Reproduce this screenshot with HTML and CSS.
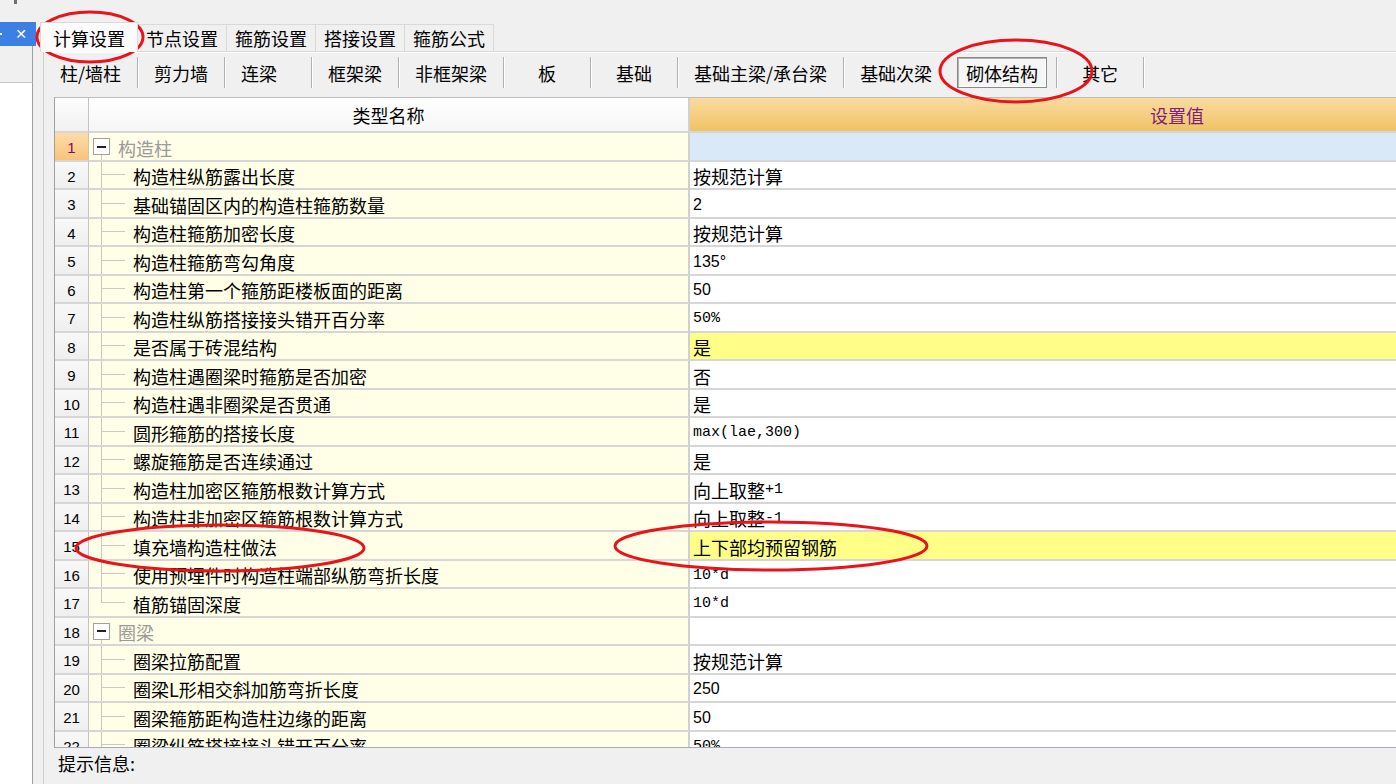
FILE: index.html
```html
<!DOCTYPE html>
<html lang="zh">
<head>
<meta charset="utf-8">
<title>计算设置</title>
<link rel="stylesheet" href="styles.css">
</head>
<body>
<div class="app">
  <aside class="side">
    <div class="side-top"><span class="tick"></span></div>
    <div class="side-title"><span class="cut"></span><span class="close">✕</span></div>
    <div class="side-tool"></div>
    <div class="side-list"></div>
  </aside>
  <main class="main">
    <nav class="tabs">
      <div class="tab active">计算设置</div>
      <div class="tab">节点设置</div>
      <div class="tab">箍筋设置</div>
      <div class="tab">搭接设置</div>
      <div class="tab">箍筋公式</div>
    </nav>
    <section class="panel">
      <div class="subtabs">
        <div class="sub">柱/墙柱</div>
        <div class="sub">剪力墙</div>
        <div class="sub start">连梁</div>
        <div class="sub">框架梁</div>
        <div class="sub">非框架梁</div>
        <div class="sub">板</div>
        <div class="sub">基础</div>
        <div class="sub">基础主梁/承台梁</div>
        <div class="sub nosep">基础次梁</div>
        <div class="sub sel"><span class="pressed">砌体结构</span></div>
        <div class="sub">其它</div>
      </div>
      <div class="grid">
        <div class="row head">
          <div class="num hnum"></div>
          <div class="name hname">类型名称</div>
          <div class="val hval">设置值</div>
        </div>
        <div class="row">
          <div class="num cur">1</div>
          <div class="name group"><span class="tog"></span>构造柱</div>
          <div class="val blue"></div>
        </div>
        <div class="row"><div class="num">2</div><div class="name child">构造柱纵筋露出长度</div><div class="val">按规范计算</div></div>
        <div class="row"><div class="num">3</div><div class="name child">基础锚固区内的构造柱箍筋数量</div><div class="val"><span class="digit">2</span></div></div>
        <div class="row"><div class="num">4</div><div class="name child">构造柱箍筋加密长度</div><div class="val">按规范计算</div></div>
        <div class="row"><div class="num">5</div><div class="name child">构造柱箍筋弯勾角度</div><div class="val"><span class="digit">135°</span></div></div>
        <div class="row"><div class="num">6</div><div class="name child">构造柱第一个箍筋距楼板面的距离</div><div class="val"><span class="digit">50</span></div></div>
        <div class="row"><div class="num">7</div><div class="name child">构造柱纵筋搭接接头错开百分率</div><div class="val"><span class="mono">50%</span></div></div>
        <div class="row"><div class="num">8</div><div class="name child">是否属于砖混结构</div><div class="val yel">是</div></div>
        <div class="row"><div class="num">9</div><div class="name child">构造柱遇圈梁时箍筋是否加密</div><div class="val">否</div></div>
        <div class="row"><div class="num">10</div><div class="name child">构造柱遇非圈梁是否贯通</div><div class="val">是</div></div>
        <div class="row"><div class="num">11</div><div class="name child">圆形箍筋的搭接长度</div><div class="val"><span class="mono">max(lae,300)</span></div></div>
        <div class="row"><div class="num">12</div><div class="name child">螺旋箍筋是否连续通过</div><div class="val">是</div></div>
        <div class="row"><div class="num">13</div><div class="name child">构造柱加密区箍筋根数计算方式</div><div class="val">向上取整<span class="mono">+1</span></div></div>
        <div class="row"><div class="num">14</div><div class="name child">构造柱非加密区箍筋根数计算方式</div><div class="val">向上取整<span class="mono">-1</span></div></div>
        <div class="row"><div class="num">15</div><div class="name child">填充墙构造柱做法</div><div class="val yel">上下部均预留钢筋</div></div>
        <div class="row"><div class="num">16</div><div class="name child">使用预埋件时构造柱端部纵筋弯折长度</div><div class="val"><span class="mono">10*d</span></div></div>
        <div class="row"><div class="num">17</div><div class="name child last">植筋锚固深度</div><div class="val"><span class="mono">10*d</span></div></div>
        <div class="row">
          <div class="num">18</div>
          <div class="name group"><span class="tog"></span>圈梁</div>
          <div class="val"></div>
        </div>
        <div class="row"><div class="num">19</div><div class="name child">圈梁拉筋配置</div><div class="val">按规范计算</div></div>
        <div class="row"><div class="num">20</div><div class="name child">圈梁L形相交斜加筋弯折长度</div><div class="val"><span class="digit">250</span></div></div>
        <div class="row"><div class="num">21</div><div class="name child">圈梁箍筋距构造柱边缘的距离</div><div class="val"><span class="digit">50</span></div></div>
        <div class="row"><div class="num">22</div><div class="name child">圈梁纵筋搭接接头错开百分率</div><div class="val"><span class="mono">50%</span></div></div>
      </div>
      <div class="status">提示信息:</div>
    </section>
  </main>
</div>
<svg class="marks" width="1396" height="784" viewBox="0 0 1396 784">
  <ellipse cx="90" cy="37" rx="53" ry="25"/>
  <ellipse cx="1016" cy="71" rx="76" ry="31"/>
  <ellipse cx="220" cy="548" rx="144" ry="23"/>
  <ellipse cx="771" cy="546" rx="156" ry="24"/>
</svg>
</body>
</html>
```
FILE: styles.css
```css
* { box-sizing: border-box; }
html, body { margin: 0; padding: 0; }
body {
  width: 1396px;
  height: 784px;
  overflow: hidden;
  position: relative;
  background: #f0f0f0;
  color: #000;
  font-family: "Noto Sans CJK SC", "Noto Sans", sans-serif;
  font-size: 18px;
  line-height: 1;
}
.app { display: flex; height: 784px; }

/* left docked panel */
.side { width: 33px; flex: none; display: flex; flex-direction: column; }
.side-top { height: 22px; padding-left: 14px; }
.tick { display: block; width: 3px; height: 4px; background: #707070; }
.side-title {
  height: 24px; width: 36px; background: #3b80e2; color: #fff;
  display: flex; align-items: center; justify-content: space-between;
}
.cut { width: 2px; height: 2px; background: #fff; }
.close { font-family: "DejaVu Sans", sans-serif; font-size: 14px; padding-right: 9px; }
.side-tool { height: 37px; border-right: 1px solid #a0a0a0; border-bottom: 1px solid #c4c4c4; }
.side-list { flex: 1; background: #fff; border-right: 1px solid #a0a0a0; }

/* main */
.main { flex: 1; min-width: 0; display: flex; flex-direction: column; }
.tabs { height: 51px; display: flex; align-items: flex-end; padding-left: 7px; }
.tab {
  height: 27px; padding: 0 8px; margin-left: -1px;
  border: 1px solid #d9d9d9; border-bottom: none;
  background: #f0f0f0; display: flex; align-items: center; white-space: nowrap;
}
.tab.active {
  height: 30px; padding: 0 12px; margin-bottom: -1px; margin-left: 0;
  background: #fbfbfb; position: relative; z-index: 1;
}

.panel {
  flex: 1; margin-left: 10px; display: flex; flex-direction: column;
  border-left: 1px solid #cfcfcf; border-top: 1px solid #d9d9d9;
}
.subtabs {
  height: 45px; display: flex; align-items: flex-start; padding-top: 4px;
  border-top: 1px solid #fff;
}
.sub {
  height: 31px; min-width: 87px; padding: 0 16px;
  display: flex; align-items: center; justify-content: center; white-space: nowrap;
  border-right: 1px solid #b0b0b0; box-shadow: 1px 0 0 #fff;
}
.sub.start { justify-content: flex-start; }
.sub.nosep { border-right: none; box-shadow: none; }
.sub.sel { padding: 0 9px; }
.pressed {
  height: 31px; padding: 0 8px; display: flex; align-items: center;
  background: #f6f6f6; border: 1px solid #8a8a8a;
  box-shadow: inset 1px 1px 0 #b0b0b0, inset -1px -1px 0 #fff;
}

/* grid */
.grid {
  margin-left: 10px; height: 651px; overflow: hidden; background: #fff;
  border-left: 1px solid #a0a0a0; border-top: 1px solid #bdbdbd; border-bottom: 1px solid #a9a9bd;
}
.row { display: flex; height: 28.5px; }
.row.head { height: 35px; }
.row > div {
  display: flex; align-items: center; white-space: nowrap;
  border-bottom: 2px solid #d6d6d6;
  padding-top: 3px;
}
.row.head > div { padding-top: 0; }
.num {
  width: 34px; flex: none; justify-content: center;
  font-family: "Liberation Sans", sans-serif; font-size: 15px;
  background: linear-gradient(#f8f8f8, #efefef);
  border-right: 1px solid #c4c4c4;
}
.num.cur { background: linear-gradient(#fddca6, #f8c47c); color: #800080; }
.name { width: 601px; flex: none; background-color: #fffee6; border-right: 2px solid #d0d0d0; }
.val { width: 974px; flex: none; padding-left: 3px; }
.head .hnum { background: linear-gradient(#fdfdfd, #f1f1f1); }
.head .hname { background: linear-gradient(#ffffff, #f6f6f6); justify-content: center; }
.head .hval { background: linear-gradient(#f9dba0, #f0c265); color: #7b1f7b; justify-content: center; padding-left: 0; }

.name.child {
  padding-left: 44px;
  background-image: linear-gradient(#c8c8c8, #c8c8c8), linear-gradient(#c8c8c8, #c8c8c8);
  background-position: 12px 0, 12px 50%;
  background-size: 1px 100%, 24px 1px;
  background-repeat: no-repeat;
}
.name.child.last { background-size: 1px 50%, 24px 1px; }
.name.group {
  color: #9a9a9a; padding-left: 4px;
  background-image: linear-gradient(#c8c8c8, #c8c8c8);
  background-position: 12px 100%;
  background-size: 1px 5px;
  background-repeat: no-repeat;
}
.tog {
  width: 17px; height: 17px; flex: none; margin-right: 8px; margin-top: -2px;
  border: 1px solid #a0a0a0;
  background: linear-gradient(#222, #222) center / 9px 2px no-repeat, #fff;
}
.val.blue { background: #d9e9f8; }
.val.yel { background: #ffff88; }
.digit { font-family: "Liberation Sans", sans-serif; font-size: 16px; }
.mono { font-family: "Liberation Mono", monospace; font-size: 15px; }

.status { flex: 1; padding: 6px 0 0 14px; }

.marks { position: absolute; left: 0; top: 0; pointer-events: none; }
.marks ellipse { fill: none; stroke: #e8141a; stroke-width: 3; }
```
